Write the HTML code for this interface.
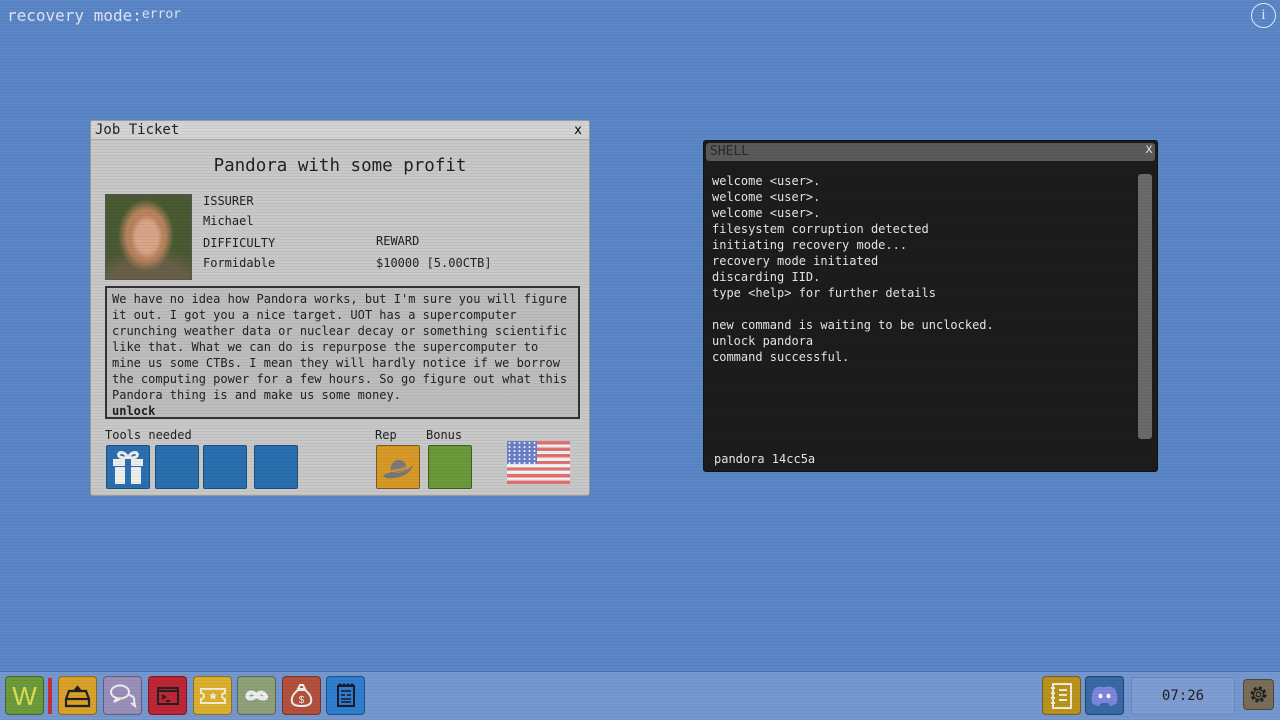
<!DOCTYPE html>
<html><head><meta charset="utf-8"><style>
*{margin:0;padding:0;box-sizing:border-box}
body{width:1280px;height:720px;overflow:hidden;background:#5b86c7;font-family:"DejaVu Sans Mono","Liberation Mono",monospace;position:relative}
.scan{position:absolute;inset:0;background:repeating-linear-gradient(0deg,rgba(0,0,0,0.05) 0 1px,transparent 1px 3px);pointer-events:none;z-index:50}
.abs{position:absolute}
#top{left:7px;top:6px;color:#dfe6f2;font-size:16px}
#top small{font-size:13px;vertical-align:3px}
#info{right:4px;top:3px;width:25px;height:25px;border:1.5px solid #e6ecf5;border-radius:50%;color:#e6ecf5;font-size:15px;text-align:center;line-height:22px;font-family:"Liberation Serif",serif}
#job{left:90px;top:120px;width:500px;height:376px;background:#c8c8c8;border:1px solid #9a9a9a;border-radius:3px}
#job .tb{height:19px;background:#d4d4d4;border-bottom:1px solid #a8a8a8;font-size:14px;padding-left:4px;line-height:19px;color:#222}
#job .x{right:7px;top:2px;font-size:13px}
#job h1{position:absolute;left:0;right:0;top:35px;text-align:center;font-weight:normal;font-size:17.5px;color:#222}
.photo{left:14px;top:73px;width:87px;height:86px;background:radial-gradient(ellipse 16px 22px at 48% 50%,#d9a487 0 70%,transparent 100%),radial-gradient(ellipse 28px 36px at 47% 48%,#b8835e 0 70%,transparent 100%),radial-gradient(ellipse 60px 30px at 50% 100%,#6a6048 0 60%,transparent 100%),#4a5a33;border:1px solid #555}
.lbl{font-size:12px;color:#222}
.desc{left:14px;top:165px;width:475px;height:133px;border:2px solid #333;background:#bdbdbd;font-size:12px;line-height:16px;padding:3px 0 0 5px;color:#222;white-space:pre}
.tool{width:44px;height:44px;top:324px;border:1px solid #1d4f80;border-radius:2px;background:#2a6faf}
#shell{left:703px;top:140px;width:455px;height:332px;background:#1c1c1c;border:1px solid #111;border-radius:3px}
#shell .tb{position:absolute;left:2px;right:2px;top:2px;height:18px;background:#5a5a5a;border-radius:3px;color:#2a2a2a;font-size:13px;line-height:18px;padding-left:4px}
#shell .x{right:4px;top:1px;color:#ddd;font-size:13px}
#shell pre{position:absolute;left:8px;top:32px;color:#e6e6e6;font-size:12px;line-height:16px;font-family:inherit}
#shell .sb{position:absolute;right:5px;top:33px;width:14px;height:265px;background:#6a6a6a;border-radius:3px}
#bar{left:0;top:671px;width:1280px;height:49px;background:#7598d0;border-top:1px solid #4c74b2}
.ic{position:absolute;top:4px;width:39px;height:39px;border-radius:4px;border:1px solid rgba(0,0,0,0.35)}
</style></head><body>
<div class="abs" id="top">recovery mode:<small>error</small></div>
<div class="abs" id="info">i</div>

<div class="abs" id="job">
 <div class="tb">Job Ticket</div><div class="abs x">x</div>
 <h1>Pandora with some profit</h1>
 <div class="abs photo"></div>
 <div class="abs lbl" style="left:112px;top:73px">ISSURER</div>
 <div class="abs lbl" style="left:112px;top:93px">Michael</div>
 <div class="abs lbl" style="left:112px;top:115px">DIFFICULTY</div>
 <div class="abs lbl" style="left:112px;top:135px">Formidable</div>
 <div class="abs lbl" style="left:285px;top:113px">REWARD</div>
 <div class="abs lbl" style="left:285px;top:135px">$10000 [5.00CTB]</div>
 <div class="abs desc">We have no idea how Pandora works, but I'm sure you will figure
it out. I got you a nice target. UOT has a supercomputer
crunching weather data or nuclear decay or something scientific
like that. What we can do is repurpose the supercomputer to
mine us some CTBs. I mean they will hardly notice if we borrow
the computing power for a few hours. So go figure out what this
Pandora thing is and make us some money.
<b>unlock</b></div>
 <div class="abs lbl" style="left:14px;top:307px">Tools needed</div>
 <div class="abs lbl" style="left:284px;top:307px">Rep</div>
 <div class="abs lbl" style="left:335px;top:307px">Bonus</div>
 <div class="abs tool" style="left:15px"><svg width="42" height="42" viewBox="0 0 42 42"><path d="M21 12c-4-8-11-6-9-2 1 2 5 2 9 2 4 0 8 0 9-2 2-4-5-6-9 2z" fill="none" stroke="#eee" stroke-width="3"/><rect x="6" y="13" width="30" height="7" fill="#eee"/><rect x="8" y="21" width="26" height="17" fill="#eee"/><rect x="18" y="13" width="6" height="25" fill="#2a6faf"/></svg></div>
 <div class="abs tool" style="left:64px"></div>
 <div class="abs tool" style="left:112px"></div>
 <div class="abs tool" style="left:163px"></div>
 <div class="abs tool" style="left:285px;background:#d79a28;border-color:#7a5a20"><svg width="42" height="42" viewBox="0 0 42 42"><path d="M6 30c4-4 8-3 12-3 6 0 12-2 18-8-2 8-10 12-18 13-6 1-10 0-12-2z" fill="#777"/><path d="M13 27c0-8 3-13 9-13 5 0 7 3 8 9-5 3-11 4-17 4z" fill="#7a7a7a"/><path d="M13 25c6 0 12-1 17-4" stroke="#d79a28" stroke-width="2" fill="none"/></svg></div>
 <div class="abs tool" style="left:337px;background:#6a9a3a;border-color:#3f5f22"></div>
 <div class="abs" style="left:416px;top:320px;width:63px;height:43px;background:repeating-linear-gradient(180deg,#e07272 0 3.3px,#f2f2f2 3.3px 6.6px)"><div style="width:30px;height:23px;background:radial-gradient(circle,#eee 0.8px,transparent 1.2px) 0 0/5px 4px,#6a7fc8"></div></div>
</div>

<div class="abs" id="shell">
 <div class="tb">SHELL</div><div class="abs x">x</div>
 <pre>welcome &lt;user&gt;.
welcome &lt;user&gt;.
welcome &lt;user&gt;.
filesystem corruption detected
initiating recovery mode...
recovery mode initiated
discarding IID.
type &lt;help&gt; for further details

new command is waiting to be unclocked.
unlock pandora
command successful.</pre>
 <div class="sb"></div>
 <div class="abs" style="left:10px;top:311px;color:#e6e6e6;font-size:12px">pandora 14cc5a</div>
</div>

<div class="abs" id="bar">
 <div class="ic" style="left:5px;background:#6d9a3a;color:#dede55;font-size:26px;text-align:center;line-height:38px;font-family:'Liberation Sans',sans-serif">W</div>
 <div class="abs" style="left:48px;top:6px;width:4px;height:36px;background:#c4303a"></div>
 <div class="ic" style="left:58px;background:#dba22b"><svg width="37" height="37" viewBox="0 0 37 37"><path d="M10 14h17l3 8v7H7v-7z M7 22h23 M16 13h5l-2.5-3z" fill="none" stroke="#222" stroke-width="2.2"/></svg></div>
 <div class="ic" style="left:103px;background:#9a8fb8"><svg width="37" height="37" viewBox="0 0 37 37"><ellipse cx="16" cy="15" rx="9" ry="6.5" fill="none" stroke="#eee" stroke-width="2"/><path d="M13 21l-3 4 6-3M25 18c4 1 6 3 5 6l1 5-4-3" fill="none" stroke="#eee" stroke-width="2"/></svg></div>
 <div class="ic" style="left:148px;background:#c02636"><svg width="37" height="37" viewBox="0 0 37 37"><rect x="9" y="11" width="20" height="16" fill="none" stroke="#222" stroke-width="2"/><path d="M9 14h20M13 18l3 2-3 2M17 24h4" stroke="#222" stroke-width="2" fill="none"/></svg></div>
 <div class="ic" style="left:193px;background:#dbb02f"><svg width="37" height="37" viewBox="0 0 37 37"><path d="M7 12h24v4a3 3 0 0 0 0 6v4H7v-4a3 3 0 0 0 0-6z" fill="none" stroke="#f4ecd0" stroke-width="2"/><path d="M19 15l1.2 2.6 2.8.3-2 1.9.5 2.8-2.5-1.4-2.5 1.4.5-2.8-2-1.9 2.8-.3z" fill="#f4ecd0"/></svg></div>
 <div class="ic" style="left:237px;background:#8fa07a"><svg width="37" height="37" viewBox="0 0 37 37"><path d="M18.5 18.5c-3-4-8-4-9 0s6 4 9 0 6-4 9 0-6 4-9 0z" fill="none" stroke="#eee" stroke-width="4"/></svg></div>
 <div class="ic" style="left:282px;background:#b4513c"><svg width="37" height="37" viewBox="0 0 37 37"><path d="M15 12h7l-2-4h-3zM15 13c-5 4-7 8-6 12 1 3 5 4 9.5 4s8.5-1 9.5-4c1-4-1-8-6-12z" fill="none" stroke="#eee" stroke-width="2"/><text x="18.5" y="26" font-size="10" text-anchor="middle" fill="#eee" font-family="Liberation Sans">$</text></svg></div>
 <div class="ic" style="left:326px;background:#2f7fd0"><svg width="37" height="37" viewBox="0 0 37 37"><rect x="11" y="9" width="16" height="20" fill="none" stroke="#1a1a2a" stroke-width="2"/><path d="M11 9l2-2 2 2 2-2 2 2 2-2 2 2 2-2 2 2M14 14h10M14 18h4M20 18h4M14 22h10M14 25h10" stroke="#1a1a2a" stroke-width="1.5" fill="none"/></svg></div>

 <div class="ic" style="left:1042px;background:#b8931f"><svg width="37" height="37" viewBox="0 0 37 37"><rect x="10" y="7" width="18" height="24" fill="none" stroke="#f2ecd4" stroke-width="2"/><path d="M8 11h4M8 16h4M8 21h4M8 26h4M16 13h8M16 18h8M16 23h8" stroke="#f2ecd4" stroke-width="2"/></svg></div>
 <div class="ic" style="left:1085px;background:#3a69a8"><svg width="37" height="37" viewBox="0 0 37 37"><path d="M8 12c4-3 7-3 8-2h5c1-1 4-1 8 2 2 4 3 9 2 14-3 2-5 3-7 3l-2-3h-7l-2 3c-2 0-4-1-7-3-1-5 0-10 2-14z" fill="#7e86dc"/><ellipse cx="14.5" cy="19" rx="2" ry="2.3" fill="#fff"/><ellipse cx="22.5" cy="19" rx="2" ry="2.3" fill="#fff"/></svg></div>
 <div class="abs" style="left:1131px;top:5px;width:104px;height:38px;border:1px solid #6a8bc0;border-radius:4px;background:#7d9dd3;text-align:center;line-height:37px;font-size:14px;color:#222">07:26</div>
 <div class="ic" style="left:1243px;top:7px;width:31px;height:31px;background:#7b6e58"><svg width="29" height="29" viewBox="0 0 29 29"><circle cx="14.5" cy="14.5" r="6.5" fill="none" stroke="#222" stroke-width="3" stroke-dasharray="3 2.1"/><circle cx="14.5" cy="14.5" r="5" fill="none" stroke="#222" stroke-width="1.3"/><circle cx="14.5" cy="14.5" r="2.3" fill="none" stroke="#222" stroke-width="1.3"/></svg></div>
</div>
<div class="scan"></div>
</body></html>
